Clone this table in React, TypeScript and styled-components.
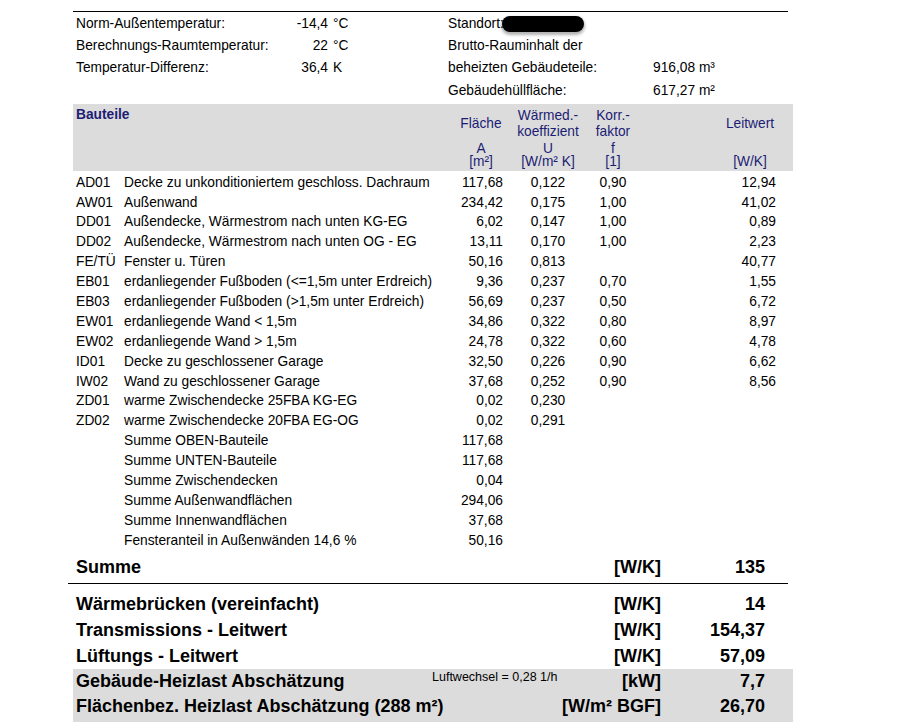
import React from "react";
import styled, { createGlobalStyle } from "styled-components";

const Global = createGlobalStyle`
  html, body { margin: 0; padding: 0; background: #fff; }
  body { font-family: "Liberation Sans", Arial, sans-serif; color: #000; }
`;

const COLS = "51px 331px 52px 82px 48px 87px 52px";

const Sheet = styled.div`
  width: 725px;
  margin-left: 68px;
  padding-top: 11px;
  font-size: 13.75px;
`;

const TopRule = styled.div`
  margin-left: 5px;
  width: 715px;
  border-top: 1px solid #000;
`;

const Info = styled.div`
  margin-left: 5px;
  padding-top: 1px;
  display: grid;
  grid-template-columns: 217px 38px 120px 205px 1fr;
  grid-auto-rows: 22.2px;
  align-items: center;
  line-height: 16px;
  white-space: nowrap;
`;

const InfoLabel = styled.div`
  padding-left: 3px;
`;

const InfoNum = styled.div`
  text-align: right;
`;

const InfoUnit = styled.div`
  padding-left: 5px;
`;

const InfoText = styled.div`
  display: flex;
  align-items: center;
`;

const Redact = styled.span`
  display: inline-block;
  width: 82px;
  height: 16px;
  margin-left: -2px;
  border-radius: 8px;
  background: #000;
  box-shadow: 0 2px 3px 1px rgba(0, 0, 0, 0.3);
`;

const Head = styled.div`
  margin: 2px 0 0 5px;
  width: 720px;
  height: 67px;
  box-sizing: border-box;
  padding-right: 17px;
  background: #dcdcdc;
  display: grid;
  grid-template-columns: ${COLS};
  color: #1c1c74;
  white-space: nowrap;
`;

const HeadTitle = styled.div`
  grid-column: 1 / span 2;
  padding: 3px 0 0 3px;
  font-weight: bold;
  font-size: 13.75px;
  line-height: 16px;
`;

const HeadCell = styled.div<{ $col: number }>`
  grid-column: ${(p) => p.$col};
  display: flex;
  flex-direction: column;
  align-items: center;
`;

const HeadTop = styled.div`
  height: 36px;
  padding-top: 2px;
  display: flex;
  flex-direction: column;
  justify-content: center;
  align-items: center;
  line-height: 15.5px;
`;

const HeadBottom = styled.div`
  display: flex;
  flex-direction: column;
  align-items: center;
  line-height: 13.5px;
`;

const Body = styled.div`
  margin: 2px 0 0 5px;
  width: 720px;
  box-sizing: border-box;
  padding-right: 17px;
`;

const Row = styled.div`
  display: grid;
  grid-template-columns: ${COLS};
  height: 19.9px;
  align-items: center;
  line-height: 16px;
  white-space: nowrap;
`;

const Code = styled.div`
  padding-left: 3px;
`;

const Desc = styled.div``;

const Area = styled.div`
  text-align: right;
  padding-right: 4px;
`;

const Mid = styled.div`
  text-align: center;
`;

const Leit = styled.div`
  grid-column: 7;
  text-align: right;
`;

const TotalGrid = styled.div`
  display: grid;
  grid-template-columns: 357px 231px 104px 1fr;
  align-items: center;
  font-weight: bold;
  font-size: 18px;
  line-height: 20px;
  white-space: nowrap;
`;

const SumRow = styled(TotalGrid)`
  width: 720px;
  box-sizing: border-box;
  padding-left: 5px;
  height: 33px;
  border-bottom: 1px solid #000;
`;

const Totals = styled.div`
  margin-left: 5px;
  width: 720px;
  padding-top: 7px;
`;

const TRow = styled(TotalGrid)<{ $h: number }>`
  height: ${(p) => p.$h}px;
`;

const GrayBand = styled.div`
  background: #dcdcdc;
  padding-bottom: 3px;
`;

const TLabel = styled.div`
  padding-left: 3px;
`;

const TUnit = styled.div`
  display: flex;
  justify-content: space-between;
  align-items: center;
  height: 100%;
`;

const Note = styled.span`
  align-self: flex-start;
  padding-top: 1px;
  font-weight: normal;
  font-size: 12.5px;
  line-height: 14px;
  padding-left: 2px;
`;

const UnitText = styled.span`
  margin-left: auto;
`;

const TValue = styled.div`
  text-align: right;
`;

type Part = [string, string, string, string, string, string];

const parts: Part[] = [
  ["AD01", "Decke zu unkonditioniertem geschloss. Dachraum", "117,68", "0,122", "0,90", "12,94"],
  ["AW01", "Außenwand", "234,42", "0,175", "1,00", "41,02"],
  ["DD01", "Außendecke, Wärmestrom nach unten KG-EG", "6,02", "0,147", "1,00", "0,89"],
  ["DD02", "Außendecke, Wärmestrom nach unten OG - EG", "13,11", "0,170", "1,00", "2,23"],
  ["FE/TÜ", "Fenster u. Türen", "50,16", "0,813", "", "40,77"],
  ["EB01", "erdanliegender Fußboden (<=1,5m unter Erdreich)", "9,36", "0,237", "0,70", "1,55"],
  ["EB03", "erdanliegender Fußboden (>1,5m unter Erdreich)", "56,69", "0,237", "0,50", "6,72"],
  ["EW01", "erdanliegende Wand < 1,5m", "34,86", "0,322", "0,80", "8,97"],
  ["EW02", "erdanliegende Wand > 1,5m", "24,78", "0,322", "0,60", "4,78"],
  ["ID01", "Decke zu geschlossener Garage", "32,50", "0,226", "0,90", "6,62"],
  ["IW02", "Wand zu geschlossener Garage", "37,68", "0,252", "0,90", "8,56"],
  ["ZD01", "warme Zwischendecke 25FBA KG-EG", "0,02", "0,230", "", ""],
  ["ZD02", "warme Zwischendecke 20FBA EG-OG", "0,02", "0,291", "", ""],
  ["", "Summe OBEN-Bauteile", "117,68", "", "", ""],
  ["", "Summe UNTEN-Bauteile", "117,68", "", "", ""],
  ["", "Summe Zwischendecken", "0,04", "", "", ""],
  ["", "Summe Außenwandflächen", "294,06", "", "", ""],
  ["", "Summe Innenwandflächen", "37,68", "", "", ""],
  ["", "Fensteranteil in Außenwänden 14,6 %", "50,16", "", "", ""],
];

const headCols: { col: number; top: string[]; bottom: string[] }[] = [
  { col: 3, top: ["Fläche"], bottom: ["A", "[m²]"] },
  { col: 4, top: ["Wärmed.-", "koeffizient"], bottom: ["U", "[W/m² K]"] },
  { col: 5, top: ["Korr.-", "faktor"], bottom: ["f", "[1]"] },
  { col: 7, top: ["Leitwert"], bottom: ["\u00a0", "[W/K]"] },
];

export default function App() {
  return (
    <>
      <Global />
      <Sheet>
        <TopRule />
        <Info>
          <InfoLabel>Norm-Außentemperatur:</InfoLabel>
          <InfoNum>-14,4</InfoNum>
          <InfoUnit>°C</InfoUnit>
          <InfoText>
            Standort:<Redact />
          </InfoText>
          <div />

          <InfoLabel>Berechnungs-Raumtemperatur:</InfoLabel>
          <InfoNum>22</InfoNum>
          <InfoUnit>°C</InfoUnit>
          <InfoText>Brutto-Rauminhalt der</InfoText>
          <div />

          <InfoLabel>Temperatur-Differenz:</InfoLabel>
          <InfoNum>36,4</InfoNum>
          <InfoUnit>K</InfoUnit>
          <InfoText>beheizten Gebäudeteile:</InfoText>
          <InfoText>916,08 m³</InfoText>

          <div />
          <div />
          <div />
          <InfoText>Gebäudehüllfläche:</InfoText>
          <InfoText>617,27 m²</InfoText>
        </Info>

        <Head>
          <HeadTitle>Bauteile</HeadTitle>
          {headCols.map((h) => (
            <HeadCell key={h.col} $col={h.col}>
              <HeadTop>
                {h.top.map((t) => (
                  <span key={t}>{t}</span>
                ))}
              </HeadTop>
              <HeadBottom>
                {h.bottom.map((t) => (
                  <span key={t}>{t}</span>
                ))}
              </HeadBottom>
            </HeadCell>
          ))}
        </Head>

        <Body>
          {parts.map((p, i) => (
            <Row key={i}>
              <Code>{p[0]}</Code>
              <Desc>{p[1]}</Desc>
              <Area>{p[2]}</Area>
              <Mid>{p[3]}</Mid>
              <Mid>{p[4]}</Mid>
              <Leit>{p[5]}</Leit>
            </Row>
          ))}
        </Body>

        <SumRow>
          <TLabel>Summe</TLabel>
          <TUnit>
            <UnitText>[W/K]</UnitText>
          </TUnit>
          <TValue>135</TValue>
        </SumRow>

        <Totals>
          <TRow $h={26}>
            <TLabel>Wärmebrücken (vereinfacht)</TLabel>
            <TUnit>
              <UnitText>[W/K]</UnitText>
            </TUnit>
            <TValue>14</TValue>
          </TRow>
          <TRow $h={26}>
            <TLabel>Transmissions - Leitwert</TLabel>
            <TUnit>
              <UnitText>[W/K]</UnitText>
            </TUnit>
            <TValue>154,37</TValue>
          </TRow>
          <TRow $h={26}>
            <TLabel>Lüftungs - Leitwert</TLabel>
            <TUnit>
              <UnitText>[W/K]</UnitText>
            </TUnit>
            <TValue>57,09</TValue>
          </TRow>
          <GrayBand>
            <TRow $h={25}>
              <TLabel>Gebäude-Heizlast Abschätzung</TLabel>
              <TUnit>
                <Note>Luftwechsel = 0,28 1/h</Note>
                <UnitText>[kW]</UnitText>
              </TUnit>
              <TValue>7,7</TValue>
            </TRow>
            <TRow $h={25}>
              <TLabel>Flächenbez. Heizlast Abschätzung (288 m²)</TLabel>
              <TUnit>
                <UnitText>[W/m² BGF]</UnitText>
              </TUnit>
              <TValue>26,70</TValue>
            </TRow>
          </GrayBand>
        </Totals>
      </Sheet>
    </>
  );
}
